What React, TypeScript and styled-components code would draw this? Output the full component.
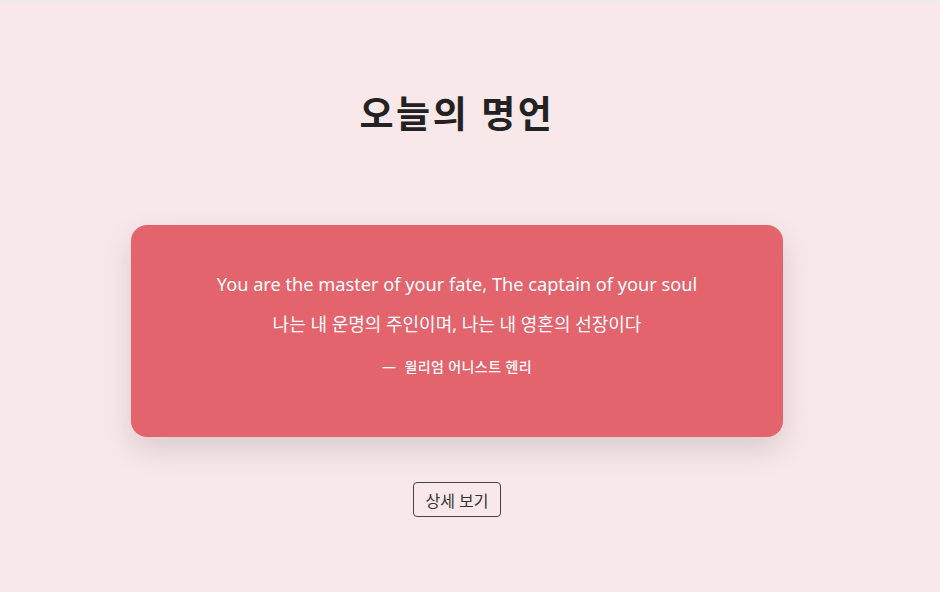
import React from "react";
import styled, { createGlobalStyle } from "styled-components";

const Global = createGlobalStyle`
  html, body { margin: 0; padding: 0; }
  body {
    background: #f9e8e9;
    font-family: "Noto Sans", "Noto Sans CJK KR", sans-serif;
  }
`;

const Page = styled.div`
  min-height: 592px;
  border-top: 2px solid #ececec;
  box-sizing: border-box;
  padding-right: 26px;
  display: flex;
  flex-direction: column;
  align-items: center;
`;

const Title = styled.h1`
  margin: 86px 0 0;
  font-size: 37px;
  font-weight: 700;
  color: #222;
  line-height: 52px;
  letter-spacing: 2.5px;
`;

const Card = styled.section`
  margin-top: 85px;
  width: 652px;
  height: 212px;
  box-sizing: border-box;
  background: #e4646e;
  border-radius: 16px;
  box-shadow: 0 12px 30px rgba(0, 0, 0, 0.13);
  display: flex;
  flex-direction: column;
  align-items: center;
  padding-top: 46px;
  color: #fff;
`;

const English = styled.p`
  margin: 0;
  font-size: 18.2px;
  line-height: 26px;
  font-weight: 400;
`;

const Korean = styled.p`
  margin: 14px 0 0;
  font-size: 18px;
  line-height: 26px;
`;

const Author = styled.p`
  margin: 20px 0 0;
  font-size: 14px;
  line-height: 20px;
  font-weight: 500;
  letter-spacing: 0.4px;
  white-space: pre;
`;

const Button = styled.button`
  margin-top: 45px;
  width: 88px;
  height: 35px;
  background: transparent;
  border: 1px solid #444;
  border-radius: 4px;
  font-family: inherit;
  font-size: 16px;
  color: #333;
  padding: 0;
`;

export default function App() {
  return (
    <>
      <Global />
      <Page>
        <Title>오늘의 명언</Title>
        <Card>
          <English>You are the master of your fate, The captain of your soul</English>
          <Korean>나는 내 운명의 주인이며, 나는 내 영혼의 선장이다</Korean>
          <Author>{"—  윌리엄 어니스트 헨리"}</Author>
        </Card>
        <Button>상세 보기</Button>
      </Page>
    </>
  );
}
